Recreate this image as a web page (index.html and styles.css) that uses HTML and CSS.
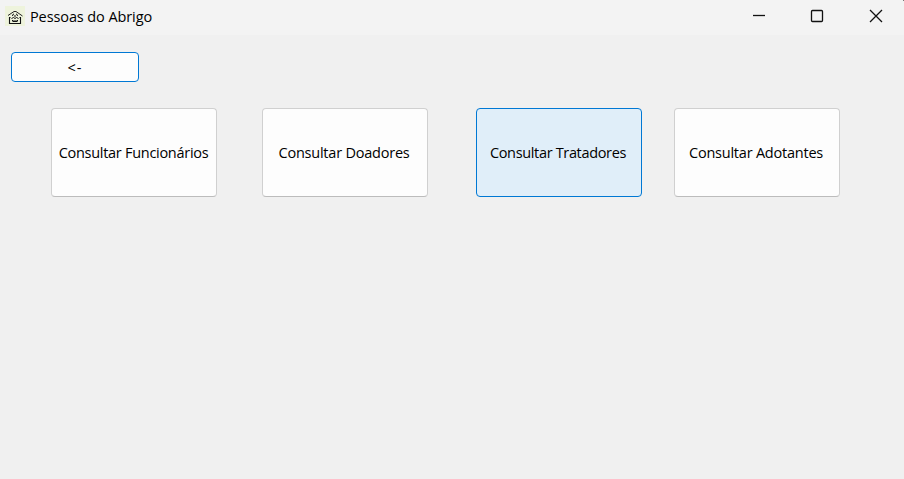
FILE: index.html
```
<!DOCTYPE html>
<html lang="pt-BR">
<head>
<meta charset="utf-8">
<title>Pessoas do Abrigo</title>
<link rel="stylesheet" href="styles.css">
</head>
<body>
<header class="titlebar">
  <svg class="app-icon" viewBox="0 0 20 20" fill="none" stroke="#111"><rect width="20" height="20" fill="#eef3dc" stroke="none"/><path d="M3 9.500 9 5.500h2l6.500 4.500" stroke-width=".9"/><path d="M5.500 11.500h-1v6h11v-6h-1" stroke-width="1.100"/><path d="M7.500 10q0-2 1.500-2M11 8q1.500 0 1.500 2M9 10h2M6.500 12.500l2-1 1.500 1 1.500-1 2 1M7 14.500h1.500M9.500 14.500h1M11.500 14.500H13M7.500 15.500h5"/></svg>
  <h1 class="title">Pessoas do Abrigo</h1>
  <div class="controls">
    <svg viewBox="0 0 58 34"><path d="M23 15.500h12"/></svg>
    <svg viewBox="0 0 58 34"><rect x="23.500" y="10.500" width="11" height="11" rx="1"/></svg>
    <svg viewBox="0 0 58 34"><path d="m24 10 12 12m0-12L24 22"/><path class="corner" d="M57 0h1v1h-1z"/></svg>
  </div>
</header>
<main class="content">
  <button class="btn back">&lt;-</button>
  <nav class="actions">
    <button class="btn card">Consultar Funcionários</button>
    <button class="btn card wide">Consultar Doadores</button>
    <button class="btn card hover">Consultar Tratadores</button>
    <button class="btn card wide">Consultar Adotantes</button>
  </nav>
</main>
</body>
</html>
```
FILE: styles.css
```
* { box-sizing: border-box; }
body { margin: 0; height: 100vh; overflow: hidden; background: #f0f0f0; color: #000; font: 14.5px/20px "Open Sans", sans-serif; letter-spacing: -0.28px; }
.titlebar { display: flex; height: 35px; background: #f3f3f3; padding-left: 5px; }
.app-icon { width: 20px; height: 20px; margin-top: 6px; }
.title { margin: 7px 0 0 5px; font-size: 14.5px; font-weight: 400; letter-spacing: -0.1px; }
.controls { display: flex; margin-left: auto; }
.controls svg { width: 58px; height: 34px; fill: none; stroke: #111; stroke-width: 1.3; }
.controls .corner { fill: #777; stroke: none; }
.content { padding: 17px 11px; }
.btn { display: block; padding: 0; border: 1px solid #d0d0d0; border-bottom-color: #bcbcbc; border-radius: 4px; background: #fdfdfd; color: #000; font: inherit; letter-spacing: inherit; white-space: nowrap; }
.back { width: 128px; height: 30px; padding-top: 1px; border-color: #0078d4; letter-spacing: 1px; }
.actions { display: grid; grid-template-columns: 211px 214px 198px 166px; margin: 26px 0 0 40px; }
.card { width: 166px; height: 89px; padding-right: 1px; }
.wide { padding-right: 2px; letter-spacing: -0.22px; }
.hover { padding-right: 2px; border-color: #0078d4; background: #e0eef9; letter-spacing: -0.34px; }
```
